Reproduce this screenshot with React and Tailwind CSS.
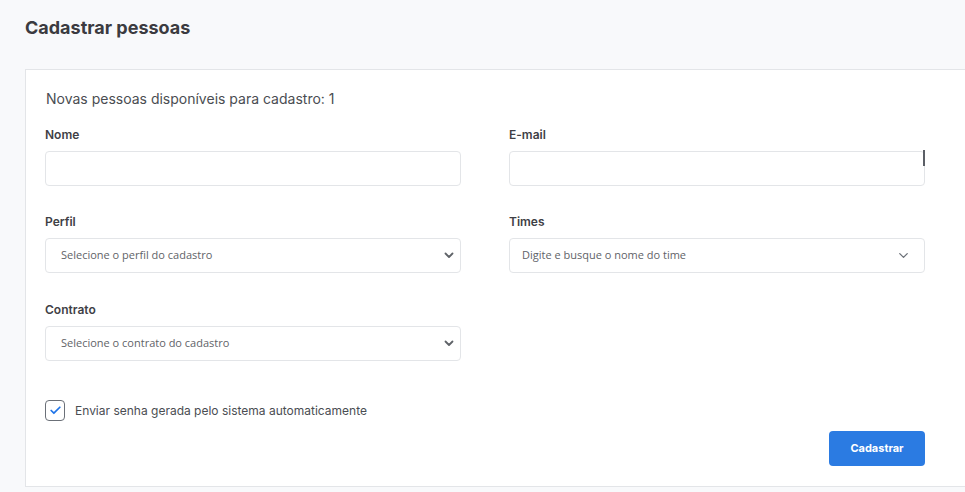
import { Check, ChevronDown } from "lucide-react";

function Label({ children }) {
  return (
    <label className="block text-[12px] leading-4 font-semibold text-[#3f3f46]">
      {children}
    </label>
  );
}

function TextInput({ cursor }) {
  return (
    <div className="relative mt-[8px]">
      <input
        type="text"
        className="block w-full h-[35px] rounded-[4px] border border-[#e3e5e8] bg-white outline-none"
      />
      {cursor && (
        <span className="absolute right-0 top-[-1px] w-[2px] h-[16px] bg-[#5b5f66]"></span>
      )}
    </div>
  );
}

function NativeSelect({ placeholder }) {
  return (
    <div className="relative mt-[8px] h-[35px] rounded-[4px] border border-[#e3e5e8] bg-white flex items-center pl-[15px] pr-[6px]">
      <span className="flex-1 text-[11px] text-[#5f6368] font-['Open_Sans',sans-serif]">
        {placeholder}
      </span>
      <svg width="10" height="7" viewBox="0 0 10 7" className="text-[#5f6368]">
        <path
          d="M1.5 1.5 5 5 8.5 1.5"
          fill="none"
          stroke="currentColor"
          strokeWidth="1.8"
          strokeLinecap="round"
          strokeLinejoin="round"
        />
      </svg>
    </div>
  );
}

function SearchSelect({ placeholder }) {
  return (
    <div className="relative mt-[8px] h-[35px] rounded-[4px] border border-[#e3e5e8] bg-white flex items-center pl-[12px] pr-[13px]">
      <span className="flex-1 text-[11px] text-[#5f6368] font-['Open_Sans',sans-serif]">
        {placeholder}
      </span>
      <ChevronDown size={15} strokeWidth={2} className="text-[#6b7078]" />
    </div>
  );
}

export default function App() {
  return (
    <div className="w-[965px] h-[492px] overflow-hidden bg-[#f8f9fb] font-['Inter',sans-serif]">
      <h1 className="pl-[25px] pt-[17px] text-[18px] leading-[22px] font-bold text-[#3b3b40]">
        Cadastrar pessoas
      </h1>

      <div className="mt-[30px] ml-[25px] w-[1000px] h-[418px] bg-white border border-[#e3e5e8] pl-[19px] pt-[19px]">
        <p className="pl-[1px] text-[14px] leading-5 text-[#4a4d52]">
          Novas pessoas disponíveis para cadastro: 1
        </p>

        <div className="mt-[18px] w-[880px] grid grid-cols-2 gap-x-12 gap-y-[28px]">
          <div>
            <Label>Nome</Label>
            <TextInput />
          </div>
          <div>
            <Label>E-mail</Label>
            <TextInput cursor />
          </div>
          <div>
            <Label>Perfil</Label>
            <NativeSelect placeholder="Selecione o perfil do cadastro" />
          </div>
          <div>
            <Label>Times</Label>
            <SearchSelect placeholder="Digite e busque o nome do time" />
          </div>
          <div className="mt-[1px]">
            <Label>Contrato</Label>
            <NativeSelect placeholder="Selecione o contrato do cadastro" />
          </div>
        </div>

        <div className="mt-[39px] flex items-center gap-[10px]">
          <span className="w-[20px] h-[21px] rounded-[4px] border border-[#6b7078] flex items-center justify-center">
            <Check size={13} strokeWidth={3.2} className="text-[#1f74e8]" />
          </span>
          <span className="text-[12px] text-[#4a4d52]">
            Enviar senha gerada pelo sistema automaticamente
          </span>
        </div>

        <div className="w-[880px] flex justify-end mt-[10px]">
          <button className="w-[96px] h-[35px] rounded-[4px] bg-[#2b7be2] text-white text-[11px] font-bold">
            Cadastrar
          </button>
        </div>
      </div>
    </div>
  );
}
